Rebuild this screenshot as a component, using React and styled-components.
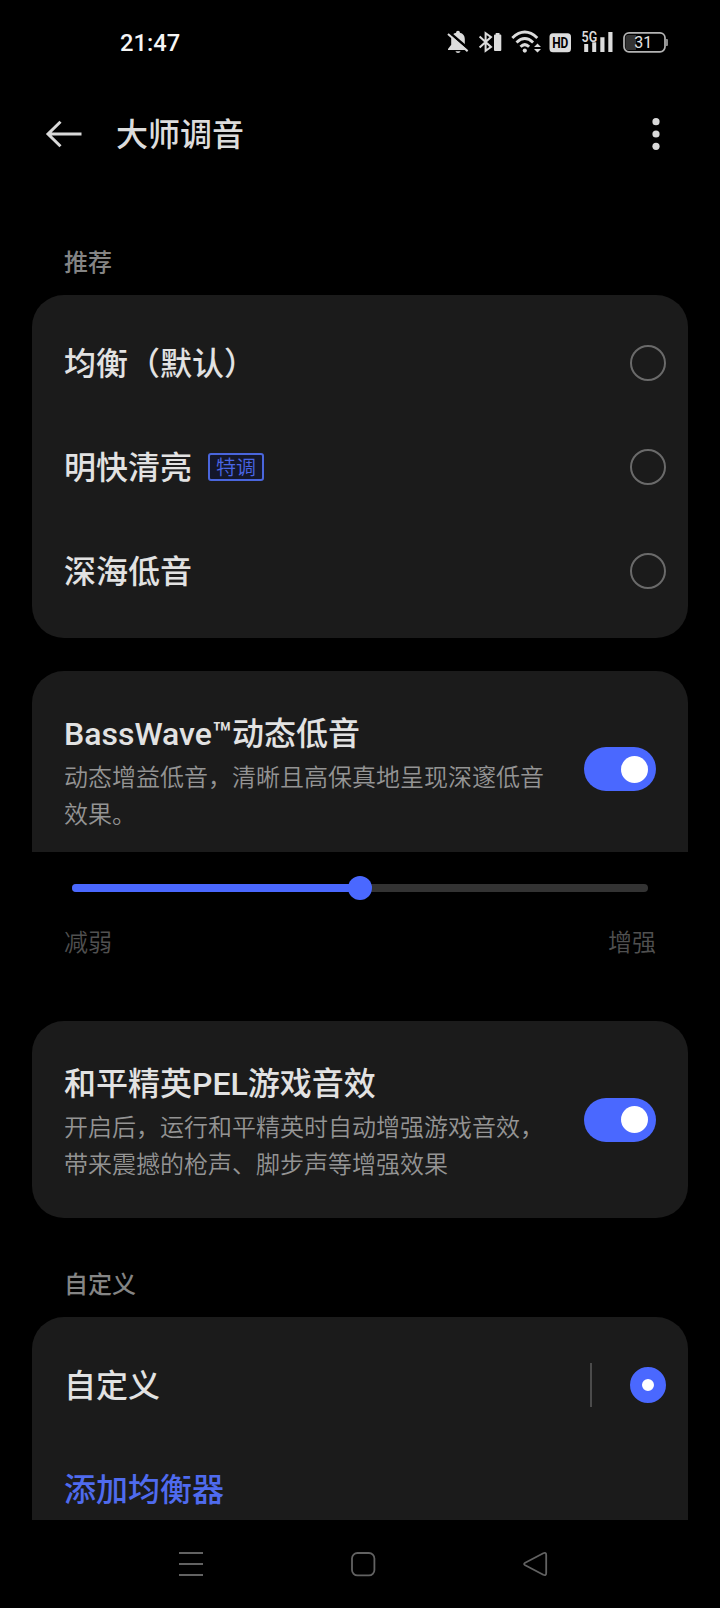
import React, { useState } from 'react';
import styled, { createGlobalStyle } from 'styled-components';

const presets = [
  { id: 'balanced', name: '均衡（默认）' },
  { id: 'bright', name: '明快清亮', tag: '特调' },
  { id: 'bass', name: '深海低音' },
];

export default function App() {
  const [selected, setSelected] = useState('custom');
  const [bassWave, setBassWave] = useState(true);
  const [gameSound, setGameSound] = useState(true);
  const level = 50;

  return (
    <>
      <GlobalStyle />
      <Screen>
        <StatusBar />
        <Header>
          <BackIcon />
          <h1>大师调音</h1>
          <MoreIcon />
        </Header>

        <Content>
          <SectionTitle>推荐</SectionTitle>
          <Card>
            {presets.map((preset) => (
              <Row key={preset.id}>
                <Name>{preset.name}</Name>
                {preset.tag && <Tag>{preset.tag}</Tag>}
                <Radio
                  $checked={selected === preset.id}
                  onClick={() => setSelected(preset.id)}
                />
              </Row>
            ))}
          </Card>

          <SwitchCard $open>
            <SwitchText>
              <Name as="h2">BassWave™动态低音</Name>
              <p>动态增益低音，清晰且高保真地呈现深邃低音效果。</p>
            </SwitchText>
            <Switch $on={bassWave} onClick={() => setBassWave(!bassWave)} />
          </SwitchCard>

          <SliderPanel>
            <Track>
              <Fill style={{ width: `${level}%` }} />
              <Thumb />
            </Track>
            <SliderLabels>
              <span>减弱</span>
              <span>增强</span>
            </SliderLabels>
          </SliderPanel>

          <SwitchCard>
            <SwitchText>
              <Name as="h2">和平精英PEL游戏音效</Name>
              <p>开启后，运行和平精英时自动增强游戏音效，带来震撼的枪声、脚步声等增强效果</p>
            </SwitchText>
            <Switch $on={gameSound} onClick={() => setGameSound(!gameSound)} />
          </SwitchCard>

          <SectionTitle $custom>自定义</SectionTitle>
          <Card $open>
            <Row>
              <Name>自定义</Name>
              <Divider />
              <Radio
                $checked={selected === 'custom'}
                onClick={() => setSelected('custom')}
              />
            </Row>
            <Row>
              <Name $accent>添加均衡器</Name>
            </Row>
          </Card>
        </Content>

        <NavBar>
          <svg width="28" height="28" fill="none" stroke="#626262" strokeWidth="2">
            <path d="M2 3H26M2 14H26M2 25H26" />
          </svg>
          <svg width="28" height="28" fill="none" stroke="#626262" strokeWidth="1.8">
            <rect x="3" y="3" width="22.4" height="22.4" rx="5.5" />
          </svg>
          <svg width="28" height="28" fill="none" stroke="#626262" strokeWidth="1.8" strokeLinejoin="round">
            <path d="M4.200 12.7L22.300 3.300Q25.200 2 25.200 5V23Q25.200 26 22.300 24.700L4.200 15.300Q2 14 4.200 12.700Z" />
          </svg>
        </NavBar>
      </Screen>
    </>
  );
}

function StatusBar() {
  return (
    <StatusRow>
      <Clock>21:47</Clock>
      {/* muted */}
      <svg width="24" height="24" fill="#dcdcdc">
        <path d="M12 .8c1.200 0 1.900.8 1.900 1.900 3.200.8 4.900 3.100 4.900 6.200v5.900l3.100 4.200v1.100H2v-1.100l3.200-4.200V8.900c0-3.100 1.700-5.400 4.900-6.200C10.100 1.600 10.800.8 12 .8z" />
        <path d="M9.500 21.300h5c-.4 1.100-1.300 1.700-2.500 1.700s-2.100-.6-2.500-1.700z" />
        <path d="M3.400 2.400L23.500 19.800" stroke="#000" strokeWidth="2.600" />
        <path d="M2 4L21.600 21.200" stroke="#dcdcdc" strokeWidth="2" />
      </svg>
      {/* bluetooth with device battery */}
      <svg width="24" height="24" fill="none" stroke="#dcdcdc">
        <path d="M1.600 6.600L13 17L7.600 20.900V3.100L13 7L1.600 17.400" strokeWidth="2" />
        <path d="M17.700 3h3.800v1.600h.800q1 0 1 1v14.400q0 1-1 1h-5.300q-1 0-1-1v-14.400q0-1 1-1h.7z" fill="#dcdcdc" stroke="none" />
      </svg>
      {/* wifi */}
      <svg width="32" height="24" fill="none" stroke="#dcdcdc" strokeWidth="2.900">
        <path d="M2.300 8Q14.800-3.800 27.300 8" />
        <path d="M6.500 12.500Q14.800 4.700 23.100 12.500" />
        <path d="M10.500 16.700Q14.800 12.500 19.100 16.700" />
        <circle cx="14.800" cy="20.600" r="2.100" fill="#dcdcdc" stroke="none" />
        <path d="M24 16.900l3.500-3.500 3.500 3.500zM24 18.900l3.500 3.500 3.500-3.500z" fill="#dcdcdc" stroke="none" />
      </svg>
      <svg width="22" height="24">
        <rect x="-.5" y="3.200" width="21.500" height="19" rx="3.500" fill="#dcdcdc" />
        <IconText x="2.200" y="18.200" fontSize="15" fontWeight="700" fill="#000" textLength="16.200" lengthAdjust="spacingAndGlyphs">HD</IconText>
      </svg>
      <svg width="34" height="24" fill="#dcdcdc">
        <IconText x="1.600" y="11.600" fontSize="14" fontWeight="600" textLength="15.600" lengthAdjust="spacingAndGlyphs">5G</IconText>
        <path d="M4.200 14h4v8h-4zM12.200 12.300h4V22h-4zM20.300 7.200h4.200V22h-4.200zM28.300 2h4.200v20h-4.200z" />
      </svg>
      <svg width="48" height="24">
        <path d="M6 5h8v15h-8q-2.500 0-2.500-2.500v-10q0-2.500 2.500-2.500z" fill="#333" />
        <rect x="2" y="2.800" width="41" height="19" rx="5" fill="none" stroke="#b4b4b4" strokeWidth="1.700" />
        <path d="M44 9h1q1 0 1 1v5q0 1-1 1h-1z" fill="#8a8a8a" />
        <IconText x="21.300" y="18.200" textAnchor="middle" fontSize="16" fontWeight="400" fill="#e4e4e4">31</IconText>
      </svg>
    </StatusRow>
  );
}

function BackIcon() {
  return (
    <svg width="38" height="30" fill="none" stroke="#d9d9d9" strokeWidth="3">
      <path d="M36.500 15H3M15.500 2.700L3 15L15.500 27.300" />
    </svg>
  );
}

function MoreIcon() {
  return (
    <svg width="8" height="34" fill="#d9d9d9">
      <circle cx="4" cy="4.700" r="3.600" />
      <circle cx="4" cy="17" r="3.600" />
      <circle cx="4" cy="29.300" r="3.600" />
    </svg>
  );
}

const GlobalStyle = createGlobalStyle`
  * {
    box-sizing: border-box;
  }

  body {
    margin: 0;
    background: #000;
    font-family: Roboto, "Noto Sans CJK SC", sans-serif;
  }

  h1, h2, p {
    margin: 0;
  }
`;

const Screen = styled.div`
  display: flex;
  flex-direction: column;
  width: 720px;
  height: 1608px;
  background: #000;
  overflow: hidden;
`;

const StatusRow = styled.div`
  display: flex;
  align-items: center;
  gap: 8px;
  height: 84px;
  padding: 0 50px 0 120px;
  flex-shrink: 0;

  svg {
    overflow: visible;
  }
`;

const Clock = styled.span`
  margin-right: auto;
  padding-top: 2px;
  font-size: 23.7px;
  font-weight: 500;
  line-height: 28px;
  color: #f5f5f5;
`;

const IconText = styled.text`
  font-family: Roboto, sans-serif;
`;

const Header = styled.header`
  display: flex;
  align-items: center;
  height: 100px;
  padding: 0 60px 0 45px;
  flex-shrink: 0;

  h1 {
    margin: 0 auto 0 33px;
    padding-top: 2px;
    font-size: 32px;
    font-weight: 500;
    line-height: 48px;
    color: #dcdcdc;
  }
`;

const Content = styled.main`
  flex: 1;
  min-height: 0;
  padding: 0 32px;
  overflow: hidden;
`;

const SectionTitle = styled.div`
  padding: ${(props) => (props.$custom ? '49px 32px 14px' : '61px 32px 14px')};
  font-size: 24px;
  font-weight: 500;
  line-height: 36px;
  color: #848484;
`;

const Card = styled.section`
  padding: 16px 0 15px;
  border-radius: ${(props) => (props.$open ? '32px 32px 0 0' : '32px')};
  background: #1b1b1b;
`;

const Row = styled.div`
  display: flex;
  align-items: center;
  height: 104px;
  padding: 0 22px 0 32px;
`;

const Name = styled.span`
  padding-top: 2px;
  font-size: 32px;
  font-weight: 500;
  line-height: 48px;
  color: ${(props) => (props.$accent ? '#4f6bee' : '#e2e2e2')};
`;

const Tag = styled.span`
  margin-left: 16px;
  width: 56px;
  height: 28px;
  border: 2px solid #4a66dc;
  border-radius: 3px;
  background: #14172a;
  font-size: 20px;
  font-weight: 350;
  line-height: 26px;
  text-align: center;
  color: #4a66e6;
`;

const Radio = styled.button`
  width: 36px;
  height: 36px;
  margin-left: auto;
  padding: 0;
  border: ${(props) => (props.$checked ? '12px solid #4a68ff' : '2px solid #6a6a6a')};
  border-radius: 50%;
  background: ${(props) => (props.$checked ? '#fff' : 'transparent')};
`;

const Divider = styled.i`
  width: 2px;
  height: 44px;
  margin: 0 38px 0 auto;
  background: #4b4b4b;

  & + ${Radio} {
    margin-left: 0;
  }
`;

const SwitchCard = styled.section`
  display: flex;
  align-items: center;
  justify-content: space-between;
  height: ${(props) => (props.$open ? '181px' : '197px')};
  margin-top: ${(props) => (props.$open ? '33px' : '0')};
  padding: ${(props) => (props.$open ? '15px 32px 0' : '0 32px')};
  border-radius: ${(props) => (props.$open ? '32px 32px 0 0' : '32px')};
  background: #1b1b1b;
`;

const SwitchText = styled.div`
  width: 484px;
  padding-top: 3px;

  p {
    margin-top: 2px;
    font-size: 24px;
    font-weight: 350;
    line-height: 36.8px;
    color: #949494;
  }
`;

const Switch = styled.button`
  display: flex;
  align-items: center;
  justify-content: ${(props) => (props.$on ? 'flex-end' : 'flex-start')};
  width: 72px;
  height: 44px;
  padding: 0 8.500px;
  border: 0;
  border-radius: 22px;
  background: ${(props) => (props.$on ? '#4a68ff' : '#4a4a4a')};

  &::after {
    content: '';
    width: 27px;
    height: 27px;
    border-radius: 50%;
    background: #fff;
  }
`;

const SliderPanel = styled.div`
  height: 169px;
  padding: 32px 32px 0;
`;

const Track = styled.div`
  display: flex;
  align-items: center;
  height: 8px;
  margin: 0 8px;
  border-radius: 4px;
  background: #333;
`;

const Fill = styled.div`
  height: 8px;
  border-radius: 4px;
  background: #4a68ff;
`;

const Thumb = styled.div`
  width: 24px;
  height: 24px;
  margin-left: -12px;
  border-radius: 50%;
  background: #4a68ff;
`;

const SliderLabels = styled.div`
  display: flex;
  justify-content: space-between;
  margin-top: 33px;
  font-size: 24px;
  font-weight: 350;
  line-height: 36px;
  color: #505050;
`;

const NavBar = styled.nav`
  display: flex;
  align-items: center;
  gap: 144px;
  height: 88px;
  padding-left: 177px;
  flex-shrink: 0;
`;
